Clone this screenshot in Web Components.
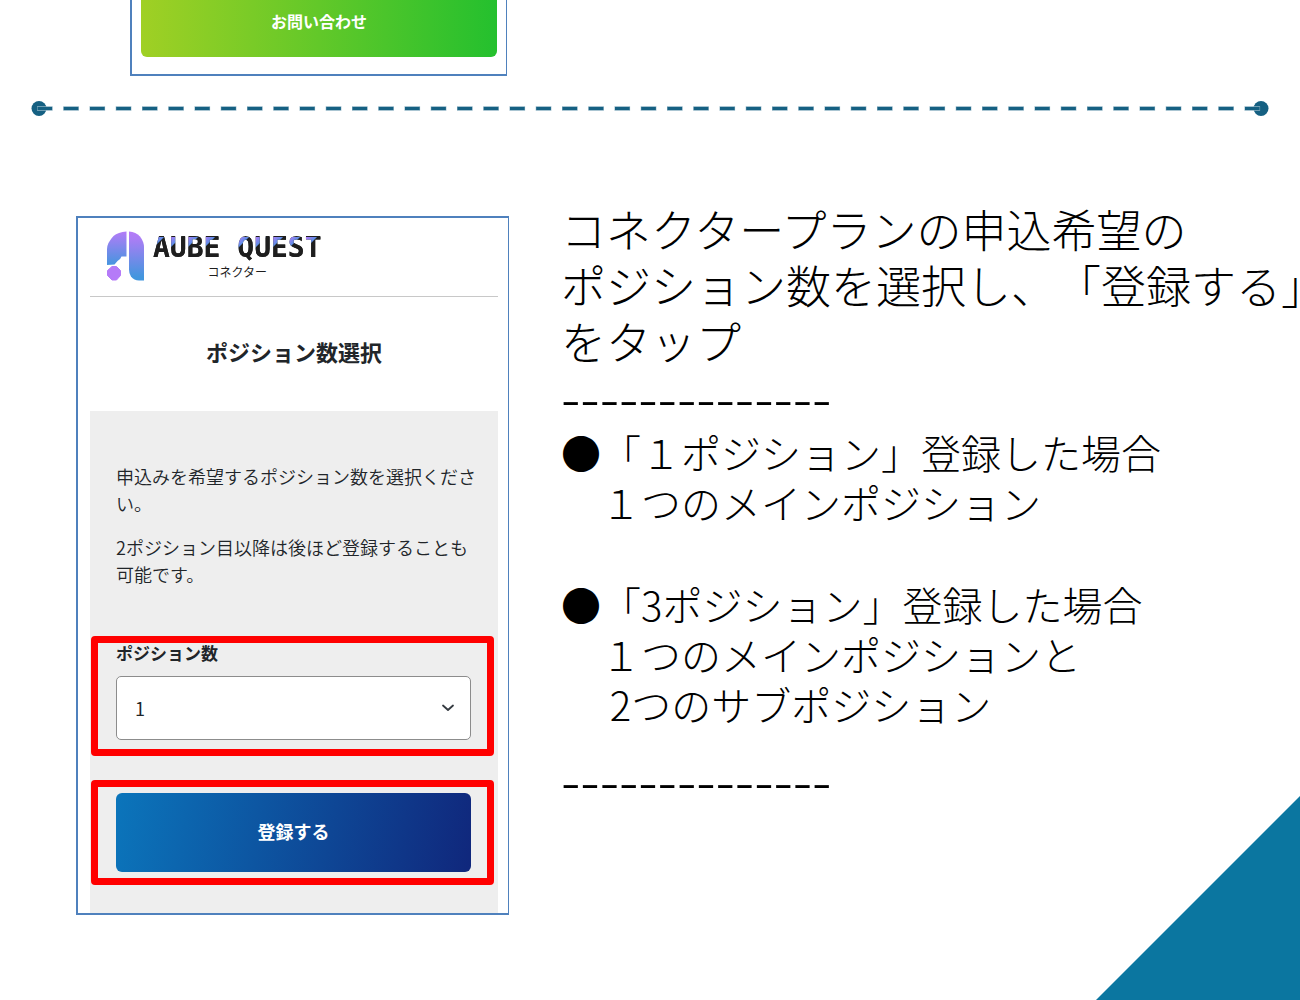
<!DOCTYPE html>
<html lang="ja">
<head>
<meta charset="utf-8">
<title>ポジション数選択</title>
<style>
body {
  margin: 0;
  background: #ffffff;
  color: #000000;
  font-family: "Noto Sans CJK JP", "Noto Sans", sans-serif;
  text-spacing-trim: space-all;
}
</style>
</head>
<body>

<guide-page>
  <phone-shot class="contact" slot="previous">
    <action-button look="green">お問い合わせ</action-button>
  </phone-shot>

  <phone-shot slot="screen">
    <brand-header></brand-header>
    <position-form heading="ポジション数選択"></position-form>
  </phone-shot>

  <guide-notes slot="notes"></guide-notes>
</guide-page>

<script>
// PAGE - previous step, divider, this step, corner
var template_page = document.createElement("template");
template_page.innerHTML = `
<style>
:host {
  display: block;
  position: relative;
  box-sizing: border-box;
  min-height: 100vh;
  overflow: hidden;
}
.previous {
  padding-left: 130px;
  display: flex;
}
.previous ::slotted(*) {
  width: 377px;
  border-top: 0;
}
step-divider {
  margin: 24px 39px 0;
}
.step {
  display: flex;
  align-items: flex-start;
  gap: 52px;
  padding: 85px 0 80px 76px;
}
slot[name="screen"]::slotted(*) {
  flex: 0 0 433px;
  margin-top: 15px;
}
slot[name="notes"]::slotted(*) {
  flex: 1 1 0;
  min-width: 0;
}
.corner {
  position: absolute;
  right: 0;
  bottom: 0;
  width: 204px;
  height: 204px;
  background: #0b76a0;
  clip-path: polygon(100% 0, 100% 100%, 0 100%);
}
</style>

<div class="previous"><slot name="previous"></slot></div>
<step-divider></step-divider>
<div class="step">
  <slot name="screen"></slot>
  <slot name="notes"></slot>
</div>
<div class="corner"></div>
`;

class GuidePage extends HTMLElement {
  constructor(){
    super();
    this.attachShadow({mode:"open"});
    this.shadowRoot.appendChild(template_page.content.cloneNode(true));
  }
}

// DIVIDER - dashed line with a dot on each end
var template_divider = document.createElement("template");
template_divider.innerHTML = `
<style>
:host { display: block; }
svg {
  display: block;
  width: 100%;
  height: 16px;
  overflow: visible;
}
</style>

<svg aria-hidden="true">
  <circle cx="0" cy="8.500" r="7.5" fill="#156082"/>
  <circle cx="100%" cy="8.500" r="7.5" fill="#156082"/>
  <line x1="-2" y1="8.500" x2="100%" y2="8.500" stroke="#8fb3c3" stroke-width="4.4" stroke-dasharray="15.6 10.65"/>
  <line x1="-1.5" y1="8.500" x2="100%" y2="8.500" stroke="#156082" stroke-width="3" stroke-dasharray="14.6 11.65"/>
</svg>
`;

class StepDivider extends HTMLElement {
  constructor(){
    super();
    this.attachShadow({mode:"open"});
    this.shadowRoot.appendChild(template_divider.content.cloneNode(true));
  }
}

// PHONE SHOT - thin blue frame round a phone screen
var template_shot = document.createElement("template");
template_shot.innerHTML = `
<style>
:host {
  display: block;
  box-sizing: border-box;
  border: 2px solid #4f81bd;
  border-right-width: 1px;
  padding: 0 10px 0 12px;
  background: #ffffff;
}
:host(.contact) {
  padding: 0 9px 17px;
}
</style>

<slot></slot>
`;

class PhoneShot extends HTMLElement {
  constructor(){
    super();
    this.attachShadow({mode:"open"});
    this.shadowRoot.appendChild(template_shot.content.cloneNode(true));
  }
}

// BUTTON - look="green" or look="blue"
var template_button = document.createElement("template");
template_button.innerHTML = `
<style>
:host { display: block; }
button {
  display: block;
  width: 100%;
  border: 0;
  border-radius: 6px;
  padding: 25px 0 27px;
  color: #ffffff;
  font-family: inherit;
  font-weight: bold;
  font-size: 18px;
  line-height: 27px;
  background: linear-gradient(100deg, #0b75bb, #10277c);
}
:host([look="green"]) button {
  border-radius: 0 0 6px 6px;
  padding: 7px 0 22px;
  font-size: 16px;
  line-height: 28px;
  background: linear-gradient(90deg, #a0d024, #24c02e);
}
</style>

<button type="button"><slot></slot></button>
`;

class ActionButton extends HTMLElement {
  constructor(){
    super();
    this.attachShadow({mode:"open"});
    this.shadowRoot.appendChild(template_button.content.cloneNode(true));
  }
}

// BRAND HEADER - mark and name
var template_brand = document.createElement("template");
template_brand.innerHTML = `
<style>
:host {
  display: flex;
  gap: 8px;
  padding: 13px 0 14px 17px;
  border-bottom: 1px solid #c8c8c8;
}
svg {
  display: block;
  width: 38px;
  height: 51px;
}
.name {
  display: flex;
  flex-direction: column;
  align-items: center;
  color: #1e1e1e;
}
.main {
  font-family: "DejaVu Sans Mono", monospace;
  font-weight: bold;
  font-size: 28px;
  line-height: 34px;
  color: transparent;
  background: linear-gradient(135deg, #b57bf8 0, #5a8ee6 24%, #1e1e1e 25%) 0 6px / 17px 28px repeat-x, #1e1e1e;
  -webkit-background-clip: text;
  background-clip: text;
}
.sub {
  font-size: 12px;
  line-height: 14px;
}
</style>

<svg viewBox="0 0 38 51" aria-hidden="true">
  <defs>
    <linearGradient id="fade" x1="0" y1="0" x2="0" y2="51" gradientUnits="userSpaceOnUse">
      <stop offset="0" stop-color="#b57bf8"/>
      <stop offset="0.15" stop-color="#ab7df5"/>
      <stop offset="0.9" stop-color="#4296de"/>
    </linearGradient>
    <linearGradient id="fade-left" x1="0" y1="0" x2="0" y2="35" gradientUnits="userSpaceOnUse">
      <stop offset="0" stop-color="#b57bf8"/>
      <stop offset="1" stop-color="#4296de"/>
    </linearGradient>
  </defs>
  <path fill="url(#fade-left)" d="M19.500 0.500v25h-5q-1 3-4 4.500l-3 3.500-7.500 0.500V18Q0 12 6.500 5 11 1 19.500 0.500z"/>
  <path fill="url(#fade)" d="M22 0.500q7 0.500 11 5 4 5 4 11v33h-5q-5 0-8-4-2-3-2-7z"/>
  <path fill="#b57bf8" d="M5 35.500h4.500l4 4v5l-4 4.500H5L0.500 44.500v-5z" stroke="#b57bf8" stroke-linejoin="round"/>
</svg>
<div class="name">
  <span class="main">AUBE QUEST</span>
  <span class="sub">コネクター</span>
</div>
`;

class BrandHeader extends HTMLElement {
  constructor(){
    super();
    this.attachShadow({mode:"open"});
    this.shadowRoot.appendChild(template_brand.content.cloneNode(true));
  }
}

// RED FRAME - marks the part to tap
var template_frame = document.createElement("template");
template_frame.innerHTML = `
<style>
:host {
  display: block;
  border: 7px solid #ff0000;
  border-radius: 4px;
  padding: 6px 16px 6px 18px;
}
</style>

<slot></slot>
`;

class RedFrame extends HTMLElement {
  constructor(){
    super();
    this.attachShadow({mode:"open"});
    this.shadowRoot.appendChild(template_frame.content.cloneNode(true));
  }
}

// FORM - heading, text, drop-down and submit
var template_form = document.createElement("template");
template_form.innerHTML = `
<style>
:host {
  display: block;
  color: #212529;
}
h1 {
  margin: 0;
  padding: 38px 0 44px;
  font-size: 22px;
  line-height: 32px;
  text-align: center;
}
.panel {
  background: #eeeeee;
  padding: 52px 4px 28px 1px;
}
p {
  margin: 0 0 17px 25px;
  font-size: 18px;
  line-height: 27px;
  font-weight: 350;
  white-space: nowrap;
}
.field {
  margin: 48px 0 24px;
  padding-top: 0;
  padding-bottom: 9px;
}
label {
  display: block;
  margin-bottom: 13px;
  font-size: 17px;
  line-height: 20px;
  font-weight: bold;
}
.select {
  position: relative;
}
select {
  display: block;
  box-sizing: border-box;
  width: 100%;
  height: 64px;
  padding: 0 18px;
  appearance: none;
  border: 1px solid #8c8c8c;
  border-radius: 5px;
  background: #ffffff;
  color: inherit;
  font-family: inherit;
  font-size: 18px;
}
.select svg {
  position: absolute;
  right: 16px;
  top: 25px;
  width: 14px;
  height: 14px;
  pointer-events: none;
}
</style>

<h1></h1>
<div class="panel">
  <p>申込みを希望するポジション数を選択くださ<br>い。</p>
  <p>2ポジション目以降は後ほど登録することも<br>可能です。</p>
  <red-frame class="field">
    <label for="count">ポジション数</label>
    <div class="select">
      <select id="count">
        <option>1</option>
        <option>3</option>
      </select>
      <svg viewBox="0 0 14 14" aria-hidden="true">
        <path d="M2 4.5 7 9l5-4.500" fill="none" stroke="#343a40" stroke-width="1.8" stroke-linecap="round" stroke-linejoin="round"/>
      </svg>
    </div>
  </red-frame>
  <red-frame>
    <action-button look="blue">登録する</action-button>
  </red-frame>
</div>
`;

class PositionForm extends HTMLElement {
  constructor(){
    super();
    this.attachShadow({mode:"open"});
    this.shadowRoot.appendChild(template_form.content.cloneNode(true));
  }

  connectedCallback(){
    this.shadowRoot.querySelector("h1").innerText = this.getAttribute("heading");
  }
}

// NOTES - the text beside the phone
var template_notes = document.createElement("template");
template_notes.innerHTML = `
<style>
:host {
  display: block;
  font-weight: 300;
}
p {
  white-space: pre;
}
.lead {
  margin: 0;
  font-size: 45px;
  line-height: 56px;
}
.dashes {
  padding-bottom: 6px;
  font-size: 58px;
  line-height: 52px;
  white-space: nowrap;
}
.case {
  margin: 0 0 52px;
  font-size: 40px;
  line-height: 50px;
}
.case.last {
  margin-bottom: 23px;
}
</style>

<p class="lead">コネクタープランの申込希望の
ポジション数を選択し、「登録する」
をタップ</p>
<div class="dashes">--------------</div>
<p class="case">●「１ポジション」登録した場合
　１つのメインポジション</p>
<p class="case last">●「3ポジション」登録した場合
　１つのメインポジションと
　 2つのサブポジション</p>
<div class="dashes">--------------</div>
`;

class GuideNotes extends HTMLElement {
  constructor(){
    super();
    this.attachShadow({mode:"open"});
    this.shadowRoot.appendChild(template_notes.content.cloneNode(true));
  }
}

customElements.define("guide-page", GuidePage);
customElements.define("step-divider", StepDivider);
customElements.define("phone-shot", PhoneShot);
customElements.define("action-button", ActionButton);
customElements.define("brand-header", BrandHeader);
customElements.define("red-frame", RedFrame);
customElements.define("position-form", PositionForm);
customElements.define("guide-notes", GuideNotes);
</script>
</body>
</html>
